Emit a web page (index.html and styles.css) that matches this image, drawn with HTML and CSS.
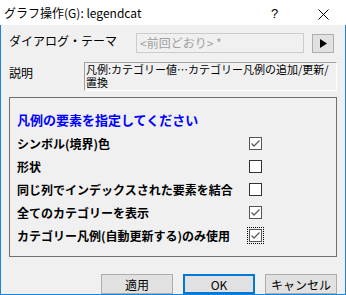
FILE: index.html
```html
<!DOCTYPE html>
<html lang="ja">
<head>
    <meta charset="UTF-8">
    <meta name="viewport" content="width=device-width, initial-scale=1.0">
    <link rel="stylesheet" href="styles.css">
    <title>グラフ操作</title>
</head>
<body>
    <div class="window">
        <div class="titlebar">
            <span class="title-text">グラフ操作(G): legendcat</span>
            <span class="title-btn help">?</span>
            <span class="title-btn close">
                <svg width="11" height="11" viewBox="0 0 11 11"><path d="M0.5 0.5 L10.5 10.5 M10.5 0.5 L0.5 10.5" stroke="#000" stroke-width="1" fill="none"/></svg>
            </span>
        </div>

        <div class="content">
            <div class="theme-row">
                <span class="field-label">ダイアログ・テーマ</span>
                <div class="combo">&lt;前回どおり&gt; *</div>
                <button class="arrow-button">
                    <svg width="7" height="9" viewBox="0 0 7 9"><path d="M0 0 L7 4.5 L0 9 Z" fill="#000"/></svg>
                </button>
            </div>

            <div class="desc-row">
                <span class="field-label desc-label">説明</span>
                <div class="desc-box">
                    <div class="desc-line">凡例:カテゴリー値…カテゴリー凡例の追加/更新/</div>
                    <div class="desc-line">置換</div>
                </div>
            </div>

            <div class="group">
                <h3 class="group-title">凡例の要素を指定してください</h3>
                <div class="option-row">
                    <span class="option-label">シンボル(境界)色</span>
                    <span class="checkbox checked"><svg width="11" height="11" viewBox="0 0 11 11"><path d="M1.5 5.5 L4 8 L9.5 2.5" stroke="#5c5c5c" stroke-width="1.3" fill="none"/></svg></span>
                </div>
                <div class="option-row">
                    <span class="option-label">形状</span>
                    <span class="checkbox"></span>
                </div>
                <div class="option-row">
                    <span class="option-label">同じ列でインデックスされた要素を結合</span>
                    <span class="checkbox"></span>
                </div>
                <div class="option-row">
                    <span class="option-label">全てのカテゴリーを表示</span>
                    <span class="checkbox checked"><svg width="11" height="11" viewBox="0 0 11 11"><path d="M1.5 5.5 L4 8 L9.5 2.5" stroke="#5c5c5c" stroke-width="1.3" fill="none"/></svg></span>
                </div>
                <div class="option-row">
                    <span class="option-label">カテゴリー凡例(自動更新する)のみ使用</span>
                    <span class="checkbox checked focused"><svg width="11" height="11" viewBox="0 0 11 11"><path d="M1.5 5.5 L4 8 L9.5 2.5" stroke="#5c5c5c" stroke-width="1.3" fill="none"/></svg></span>
                </div>
            </div>

            <div class="button-row">
                <button class="dlg-button">適用</button>
                <button class="dlg-button default">OK</button>
                <button class="dlg-button">キャンセル</button>
            </div>
        </div>
    </div>
</body>
</html>
```

FILE: styles.css
```css
*{
    margin:0px;
    padding:0px;
    box-sizing: border-box;
}
body{
    font-family: "Noto Sans CJK JP", "Noto Sans", sans-serif;
    font-size: 12px;
    color: #000;
    background: #fff;
}
.window{
    width: 346px;
    height: 295px;
    display: flex;
    flex-direction: column;
}
.titlebar{
    height: 25px;
    background: #fff;
    display: flex;
    align-items: center;
}
.title-text{
    flex: 1;
    padding-left: 4px;
    font-size: 12px;
    line-height: 16px;
}
.title-btn{
    width: 46px;
    height: 25px;
    display: flex;
    align-items: center;
    justify-content: center;
}
.help{
    font-family: "Liberation Sans", sans-serif;
    font-size: 13px;
    padding-top: 2px;
    padding-right: 5px;
}
.close{
    padding-top: 3px;
}
.content{
    flex: 1;
    background: #f0f0f0;
    border: 1px solid #1883d7;
    border-top: 0;
    padding: 0 8px;
    display: flex;
    flex-direction: column;
}
.theme-row{
    margin-top: 8px;
    height: 20px;
    display: flex;
    align-items: flex-start;
}
.field-label{
    width: 127px;
    line-height: 16px;
}
.combo{
    width: 168px;
    height: 20px;
    border: 1px solid #cccccc;
    background: #f0f0f0;
    color: #a0a0a0;
    padding-left: 3px;
    line-height: 17px;
}
.arrow-button{
    margin-left: 8px;
    margin-top: 1px;
    width: 22px;
    height: 19px;
    border: 1px solid #adadad;
    background: #e1e1e1;
    display: flex;
    align-items: center;
    justify-content: center;
}
.desc-row{
    margin-top: 9px;
    display: flex;
}
.desc-label{
    width: 75px;
    padding-top: 3px;
}
.desc-box{
    width: 253px;
    height: 29px;
    overflow: hidden;
    white-space: nowrap;
    border-top: 1px solid #a0a0a0;
    border-left: 1px solid #a0a0a0;
    border-right: 1px solid #fff;
    border-bottom: 1px solid #fff;
    font-size: 11px;
    padding-left: 1px;
}
.desc-line{
    height: 13px;
    line-height: 13px;
}
.group{
    margin-top: 6px;
    height: 160px;
    border: 1px solid #707070;
    padding: 14px 0 0 7px;
}
.group-title{
    font-size: 13px;
    font-weight: bold;
    line-height: 16px;
    color: #0000ff;
    margin-bottom: 4px;
}
.option-row{
    height: 23px;
    display: flex;
    align-items: center;
}
.option-label{
    width: 232px;
    font-weight: bold;
    line-height: 16px;
    white-space: nowrap;
}
.checkbox{
    width: 13px;
    height: 13px;
    border: 1px solid #333333;
    background: #fff;
    display: flex;
}
.checkbox.checked{
    border-color: #555555;
}
.checkbox.focused{
    outline: 1px dotted #000;
    outline-offset: 1px;
}
.button-row{
    margin-top: 17px;
    display: flex;
    justify-content: flex-end;
    gap: 10px;
}
.dlg-button{
    width: 72px;
    height: 20px;
    border: 1px solid #adadad;
    background: #e1e1e1;
    font-family: "Noto Sans CJK JP", "Noto Sans", sans-serif;
    font-size: 12px;
    color: #000;
}
.dlg-button.default{
    border: 2px solid #0078d7;
}
```
